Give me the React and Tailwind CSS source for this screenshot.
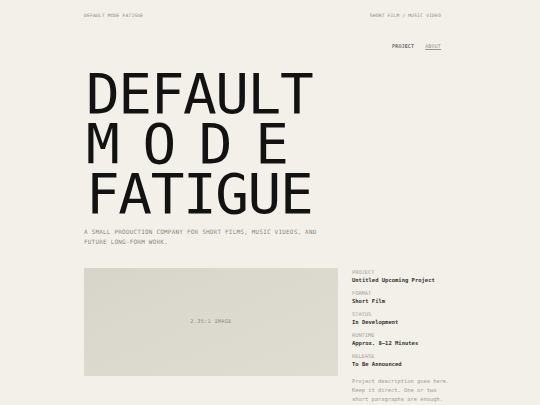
import React from "react";

const mono = { fontFamily: '"DejaVu Sans Mono", "Liberation Mono", monospace' };

const details = [
  { label: "PROJECT", value: "Untitled Upcoming Project" },
  { label: "FORMAT", value: "Short Film" },
  { label: "STATUS", value: "In Development" },
  { label: "RUNTIME", value: "Approx. 8–12 Minutes" },
  { label: "RELEASE", value: "To Be Announced" },
];

const App = () => {
  return (
    <div
      className="min-h-[405px] w-[540px] overflow-hidden bg-[#f2f0e8] text-[#161616]"
      style={mono}
    >
      <div className="ml-[84px] w-[357px]">
        {/* top bar */}
        <div className="flex justify-between pt-[13px] text-[4.6px] leading-[6px] tracking-[0.2px] text-[#8a8880]">
          <span>DEFAULT MODE FATIGUE</span>
          <span>SHORT FILM / MUSIC VIDEO</span>
        </div>

        {/* nav */}
        <div className="mt-[24px] flex justify-end gap-[11px] text-[5px] leading-[6px] tracking-[0.15px]">
          <span className="text-[#2a2a2a]">PROJECT</span>
          <span className="text-[#9a978e] underline underline-offset-[1px]">ABOUT</span>
        </div>

        {/* title */}
        <h1 className="mt-[20px] pl-[2px] text-[56px] font-normal leading-[50px] tracking-[-1.4px] text-[#121212]">
          <div>DEFAULT</div>
          <div className="tracking-[22.7px]">MODE</div>
          <div>FATIGUE</div>
        </h1>

        <div className="mt-[8px] text-[6px] leading-[10px] tracking-[0.2px] text-[#1a1810]/55">
          <div>A SMALL PRODUCTION COMPANY FOR SHORT FILMS, MUSIC VIDEOS, AND</div>
          <div>FUTURE LONG-FORM WORK.</div>
        </div>

        {/* project block */}
        <div className="mt-[21px] flex gap-[14px]">
          <div className="flex h-[108px] w-[254px] shrink-0 items-center justify-center bg-gradient-to-br from-[#d7d4ca] via-[#dcd9cf] to-[#dfdcd2]">
            <span className="text-[5.3px] tracking-[0.25px] text-[#8c8a82]">2.35:1 IMAGE</span>
          </div>

          <div className="flex flex-col whitespace-nowrap">
            {details.map((item) => (
              <div key={item.label} className="mb-[4px]">
                <div className="text-[5.3px] leading-[8px] text-[#a3a097]">{item.label}</div>
                <div className="text-[5.5px] leading-[9px] font-bold text-[#34332f]">{item.value}</div>
              </div>
            ))}
            <p className="mt-[4px] text-[5.4px] leading-[9px] text-[#a09d94]">
              Project description goes here.
              <br />
              Keep it direct. One or two
              <br />
              short paragraphs are enough.
            </p>
          </div>
        </div>
      </div>
    </div>
  );
};

export default App;
